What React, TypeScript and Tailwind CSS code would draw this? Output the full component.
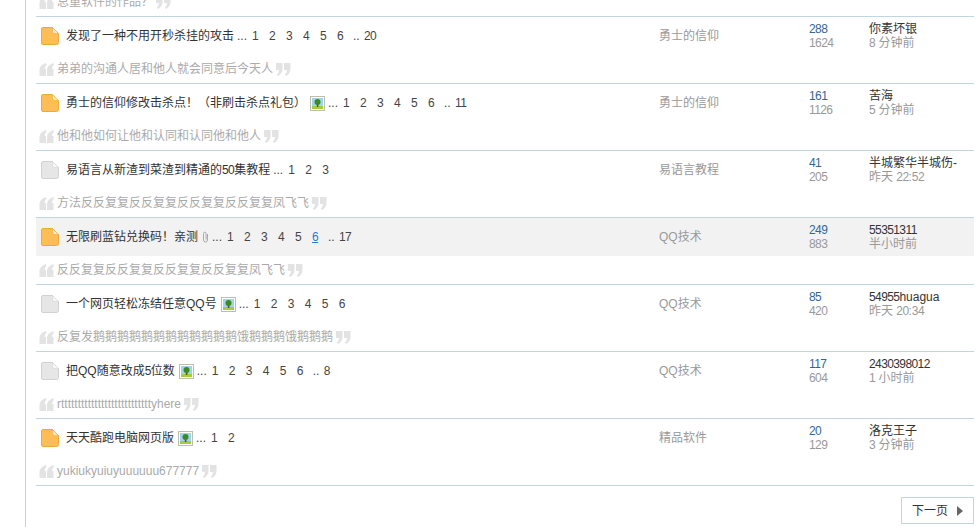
const font = '[font-family:"Liberation_Sans","Noto_Sans_CJK_SC",sans-serif]';

type Thread = {
  title: string;
  hot: boolean;
  image?: boolean;
  attach?: boolean;
  pages: string[];
  current?: string;
  forum: string;
  replies: string;
  views: string;
  author: string;
  time: string;
  summary: string;
  highlight?: boolean;
};

const threads: Thread[] = [
  { title: '发现了一种不用开秒杀挂的攻击', hot: true, pages: ['1', '2', '3', '4', '5', '6', '..', '20'], forum: '勇士的信仰', replies: '288', views: '1624', author: '你素坏银', time: '8 分钟前', summary: '弟弟的沟通人居和他人就会同意后今天人' },
  { title: '勇士的信仰修改击杀点！（非刷击杀点礼包）', hot: true, image: true, pages: ['1', '2', '3', '4', '5', '6', '..', '11'], forum: '勇士的信仰', replies: '161', views: '1126', author: '苦海', time: '5 分钟前', summary: '他和他如何让他和认同和认同他和他人' },
  { title: '易语言从新渣到菜渣到精通的50集教程', hot: false, pages: ['1', '2', '3'], forum: '易语言教程', replies: '41', views: '205', author: '半城繁华半城伤-', time: '昨天 22:52', summary: '方法反反复复反反复复反反复复反反复复凤飞飞' },
  { title: '无限刷蓝钻兑换码！亲测', hot: true, attach: true, pages: ['1', '2', '3', '4', '5', '6', '..', '17'], current: '6', forum: 'QQ技术', replies: '249', views: '883', author: '55351311', time: '半小时前', summary: '反反复复反反复复反反复复反反复复凤飞飞', highlight: true },
  { title: '一个网页轻松冻结任意QQ号', hot: false, image: true, pages: ['1', '2', '3', '4', '5', '6'], forum: 'QQ技术', replies: '85', views: '420', author: '54955huagua', time: '昨天 20:34', summary: '反复发鹅鹅鹅鹅鹅鹅鹅鹅鹅鹅鹅鹅饿鹅鹅鹅饿鹅鹅鹅' },
  { title: '把QQ随意改成5位数', hot: false, image: true, pages: ['1', '2', '3', '4', '5', '6', '..', '8'], forum: 'QQ技术', replies: '117', views: '604', author: '2430398012', time: '1 小时前', summary: 'rtttttttttttttttttttttttttttyhere' },
  { title: '天天酷跑电脑网页版', hot: true, image: true, pages: ['1', '2'], forum: '精品软件', replies: '20', views: '129', author: '洛克王子', time: '3 分钟前', summary: 'yukiukyuiuyuuuuuu677777' },
];

// digits in the reference are narrower than Liberation's
function Digits({ text }: { text: string }) {
  return (
    <>
      {text.split(/(\d+)/).map((part, i) =>
        /\d/.test(part) ? (
          <span key={i} className="tracking-[-0.6px]">
            {part}
          </span>
        ) : (
          part
        ),
      )}
    </>
  );
}

function FileIcon({ hot }: { hot: boolean }) {
  const body = hot ? '#ffbe55' : '#e6e6e6';
  const edge = hot ? '#f0a93c' : '#d2d2d2';
  const fold = hot ? '#ffe9c0' : '#f7f7f7';
  return (
    <svg width="18" height="18" viewBox="0 0 18 18" className="shrink-0">
      <path d="M2 .5h9.5l6 6V15.500a2 2 0 0 1-2 2H2a1.500 1.500 0 0 1-1.500-1.500V2A1.500 1.500 0 0 1 2 .5z" fill={body} stroke={edge} />
      <path d="M11.500.5v4.500a1.500 1.500 0 0 0 1.500 1.500h4.500z" fill={fold} stroke={edge} strokeWidth="0.6" />
    </svg>
  );
}

function ImageIcon() {
  return (
    <svg width="15" height="15" viewBox="0 0 15 15" className="ml-[4px] shrink-0">
      <rect x="0.500" y="0.500" width="14" height="14" fill="#fff" stroke="#bdbfae" />
      <rect x="2" y="2" width="11" height="8" fill="#9fd4ee" />
      <rect x="2" y="10" width="11" height="3" fill="#a5cc3a" />
      <rect x="6.800" y="7" width="1.600" height="4" fill="#6b4a1c" />
      <circle cx="7.500" cy="6" r="3" fill="#3f8a1f" />
    </svg>
  );
}

function ClipIcon() {
  return (
    <svg width="9" height="12" viewBox="0 0 9 12" fill="none" stroke="#aaa" className="ml-[3px] mr-[-1px] shrink-0">
      <path d="M6.500 3v6a2 2 0 0 1-4 0V2.500a1.300 1.300 0 0 1 2.600 0V8.500" />
    </svg>
  );
}

function Quote({ close }: { close?: boolean }) {
  return (
    <svg width="15" height="13" viewBox="0 0 15 13" fill="#e3e3e3" className="shrink-0">
      {close ? (
        <path d="M0 0h6.500v6Q6.500 10.500 2 13L.8 11.500Q2.800 10 3 7H0zM8 0h6.500v6Q14.500 10.500 10 13L8.800 11.500Q10.800 10 11 7H8z" />
      ) : (
        <path d="M6.500 0L7.700 1.500Q5.700 3 5.500 6H7v7H.5V7Q.5 2.500 6.500 0zM14 0L15 1.500Q13.200 3 13 6H14.500v7H8V7Q8 2.500 14 0z" />
      )}
    </svg>
  );
}

function Row({ t }: { t: Thread }) {
  return (
    <div className="h-[67px] border-b border-[#c2d5e3]">
      <div className={`flex h-[38px] items-center ${t.highlight ? 'bg-[#f2f2f2]' : ''}`}>
        <div className="flex w-[623px] items-center pl-[5px]">
          <FileIcon hot={t.hot} />
          <span className="ml-[7px] text-[#333]">
            <Digits text={t.title} />
          </span>
          {t.image && <ImageIcon />}
          {t.attach && <ClipIcon />}
          <span className="ml-[3px] text-[#444]">...</span>
          <span className="ml-[5px] flex">
            {t.pages.map((p, i) =>
              p === '..' ? (
                <a key={i} className="ml-[-1px] mr-[1px] w-[10px] text-[#444]">
                  {p}
                </a>
              ) : (
                <a
                  key={i}
                  className={`box-content min-w-[13px] pr-[4px] tracking-[-0.6px] ${p === t.current ? 'text-[#2b7acd] underline' : 'text-[#444]'}`}
                >
                  {p}
                </a>
              ),
            )}
          </span>
        </div>
        <div className="w-[150px] text-[#999]">{t.forum}</div>
        <div className="w-[60px] leading-[14px] tracking-[-0.6px]">
          <div className="text-[#369]">{t.replies}</div>
          <div className="text-[#999]">{t.views}</div>
        </div>
        <div className="flex-1 leading-[14px]">
          <div className="text-[#333]">
            <Digits text={t.author} />
          </div>
          <div className="text-[#999]">
            <Digits text={t.time} />
          </div>
        </div>
      </div>
      <div className="flex h-[28px] items-center pl-[3px]">
        <Quote />
        <span className="mx-[3px] text-[#aaa]">{t.summary}</span>
        <Quote close />
      </div>
    </div>
  );
}

export default function App() {
  return (
    <div className={`${font} h-[527px] w-[976px] overflow-hidden bg-white text-[12px]`}>
      <div className="ml-[25px] h-full border-l border-[#d0d0d0] pl-[10px] pr-[2px]">
        <div className="flex h-[17px] items-end overflow-hidden border-b border-[#c2d5e3] pl-[3px]">
          <div className="mb-[5px] flex items-center">
            <Quote />
            <span className="mx-[3px] text-[#aaa]">总重软件的作品？</span>
            <Quote close />
          </div>
        </div>
        {threads.map((t) => (
          <Row key={t.title} t={t} />
        ))}
        <div className="mt-[11px] flex justify-end">
          <a className="flex h-[27px] w-[73px] items-center border border-[#c2d5e3] pl-[10px] text-[#333]">
            下一页
            <span className="ml-[9px] h-0 w-0 border-y-[5px] border-l-[6px] border-y-transparent border-l-[#666]" />
          </a>
        </div>
      </div>
    </div>
  );
}
